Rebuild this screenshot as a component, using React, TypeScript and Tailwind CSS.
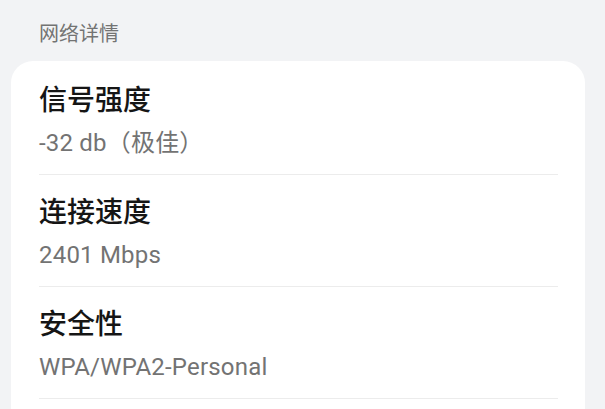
import React from "react";

const rows = [
  { title: "信号强度", value: "-32 db（极佳）" },
  { title: "连接速度", value: "2401 Mbps" },
  { title: "安全性", value: "WPA/WPA2-Personal" },
];

export default function App() {
  return (
    <div
      className="h-[409px] w-[605px] overflow-hidden bg-[#f2f3f5]"
      style={{ fontFamily: 'Roboto, "Noto Sans CJK SC", sans-serif' }}
    >
      <div className="pl-[39px] pt-[20px] text-[20px] leading-[28px] text-[#737373]">网络详情</div>
      <div className="ml-[11px] mr-[20px] mt-[13px] rounded-[22px] bg-white pl-[28px] pr-[27px] pt-[2px] pb-[40px]">
        {rows.map((r) => (
          <div key={r.title} className="border-b border-[#ececec] pt-[20px] pb-[16px]">
            <div className="text-[28px] font-medium leading-[36px] text-[#151515]">{r.title}</div>
            <div className="mt-[9px] text-[24px] leading-[30px] tracking-[0.2px] text-[#737373]">{r.value}</div>
          </div>
        ))}
      </div>
    </div>
  );
}
